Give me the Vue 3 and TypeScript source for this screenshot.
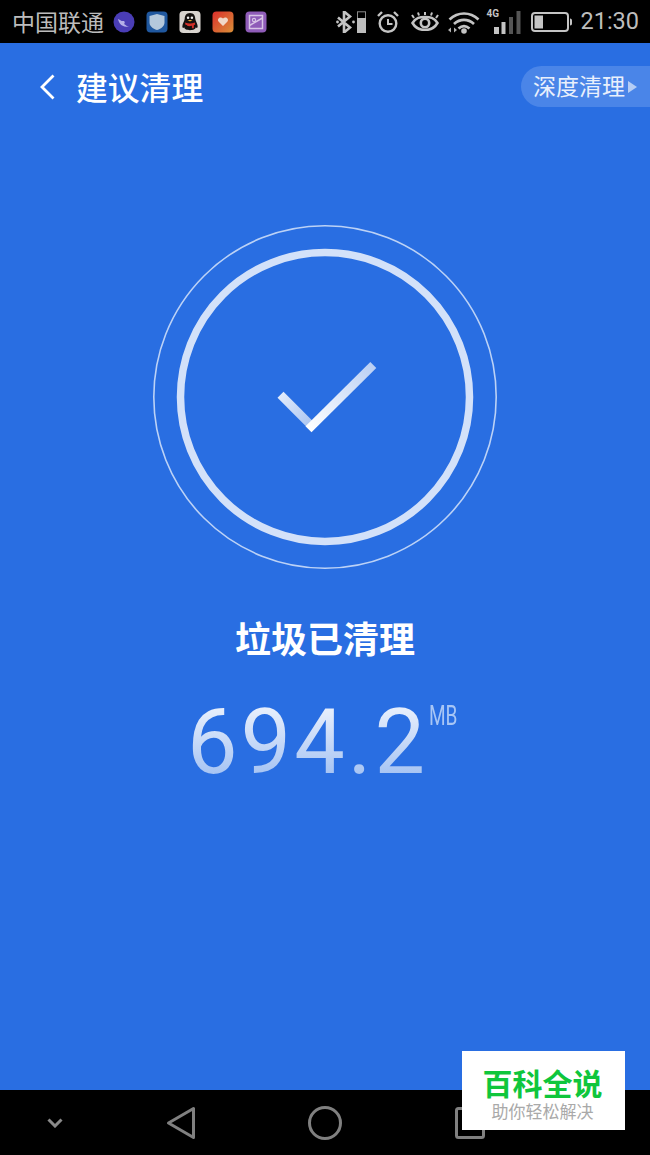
<script setup lang="ts">
const title = '建议清理'
const cleaned = '垃圾已清理'
const size = '694.2'
</script>

<template>
  <div class="screen">
    <div class="status">
      <span class="carrier">中国联通</span>
      <div class="apps">
        <svg class="app" viewBox="0 0 22 22"><circle cx="11" cy="11" r="10.500" fill="#4a3db5"/><path d="M5 8c1 5 4 8 11 8-3-1-3-2-5-3 1-1 1-2 0-3-2 0-3 0-4-1z" fill="#b5b0e8"/></svg>
        <svg class="app" viewBox="0 0 22 22"><rect x="0.500" y="0.500" width="21" height="21" rx="4" fill="#20589f"/><path d="M11 3l7.500 2v6.500c0 3.500-3 6-7.500 7.500-4.500-1.500-7.500-4-7.500-7.500V5z" fill="#b4c8dc"/></svg>
        <svg class="app" viewBox="0 0 22 23"><rect width="22" height="23" rx="4" fill="#d8d4cf"/><path d="M11 2c4 0 5.500 3 5.500 6 0 2 2.500 5 2.500 8 0 2-1 2-2 1 0 2-3 3-6 3s-6-1-6-3c-1 1-2 1-2-1 0-3 2.500-6 2.500-8 0-3 1.500-6 5.500-6z" fill="#14110f"/><path d="M6 12c3 1.500 7 1.500 10 0l.5 2-1.500 1v3H13v-2.500c-2 .5-3.500.5-5 0V15l-2-1z" fill="#d23028"/><circle cx="9" cy="7" r="1.300" fill="#eee"/><circle cx="13" cy="7" r="1.300" fill="#eee"/><path d="M8.500 9.500h5L11 11z" fill="#e8a930"/></svg>
        <svg class="app" viewBox="0 0 22 22"><defs><linearGradient id="hg" x1="0" y1="0" x2="1" y2="1"><stop offset="0" stop-color="#dc2f2c"/><stop offset="1" stop-color="#d99038"/></linearGradient></defs><rect x="0.500" y="0.500" width="21" height="21" rx="4" fill="url(#hg)"/><path d="M11 15l-4.500-4.500c-2-3.500 2.500-5.500 4.500-3 2-2.500 6.500-.5 4.500 3z" fill="#f0d8c8"/></svg>
        <svg class="app" viewBox="0 0 22 22"><rect x="0.500" y="0.500" width="21" height="21" rx="4" fill="#8f5cb8"/><rect x="4.500" y="4.500" width="13" height="13" fill="none" stroke="#d8c4e6" stroke-width="1.500"/><path d="M4.500 14.500l13-7.500" stroke="#d8c4e6" stroke-width="1.500"/><circle cx="9" cy="9" r="1.600" fill="none" stroke="#d8c4e6" stroke-width="1.200"/></svg>
      </div>
      <div class="sys">
        <svg class="i-bt" viewBox="0 0 30 22"><path d="M2 6.500l12 10-6 5v-21l6 5-12 10" fill="none" stroke="#c4c4c4" stroke-width="2.600"/><circle cx="1.500" cy="11" r="1.400" fill="#c4c4c4"/><circle cx="17.500" cy="11" r="1.400" fill="#c4c4c4"/><rect x="21.500" y="0.800" width="8" height="20.400" fill="none" stroke="#8a8a8a" stroke-width="1"/><rect x="21" y="7" width="9" height="15" fill="#bdbdbd"/></svg>
        <svg class="i-alarm" viewBox="0 0 22 22"><circle cx="11" cy="12.500" r="8.300" fill="none" stroke="#c4c4c4" stroke-width="2.400"/><path d="M11 8v5h4.500" fill="none" stroke="#c4c4c4" stroke-width="2"/><path d="M1 5l4-4M21 5l-4-4" stroke="#c4c4c4" stroke-width="2.400"/></svg>
        <svg class="i-eye" viewBox="0 0 28 19"><path d="M1.500 11C5 5.500 9 5 14 5s9 .5 12.500 6C23 17 19 18 14 18S5 17 1.500 11z" fill="none" stroke="#c4c4c4" stroke-width="2.500"/><circle cx="14" cy="11" r="4.200" fill="none" stroke="#c4c4c4" stroke-width="2.600"/><path d="M3 6L1 3M8 3.500L7 .5M14 3V0M20 3.500l1-3M25 6l2-3" stroke="#c4c4c4" stroke-width="2"/></svg>
        <svg class="i-wifi" viewBox="0 0 32 24"><path d="M1.500 9.500c8.500-8 20.500-8 29 0M6 14c6-5.500 14-5.500 20 0M10.500 18.500c3.500-3 7.500-3 11 0" fill="none" stroke="#c4c4c4" stroke-width="2.700"/><circle cx="16" cy="21" r="2.800" fill="#c4c4c4"/><path d="M0 20l3-2.500v5zM9 20l-3-2.500v5z" fill="#b0b0b0"/></svg>
        <div class="signal">
          <span class="net">4G</span>
          <svg class="i-sig" viewBox="0 0 27 23"><rect x="0" y="16" width="5" height="7" fill="#c4c4c4"/><rect x="7.500" y="11" width="4" height="12" fill="#c4c4c4"/><rect x="15" y="6" width="4" height="17" fill="#555"/><rect x="22.500" y="0" width="4" height="23" fill="#555"/></svg>
        </div>
        <svg class="i-bat" viewBox="0 0 41 20"><rect x="1" y="1" width="36" height="18" rx="3" fill="none" stroke="#c4c4c4" stroke-width="2"/><rect x="3.500" y="3.500" width="8.500" height="13" fill="#c4c4c4"/><path d="M39 6.500c1.500 0 2 1 2 2v3c0 1-.5 2-2 2z" fill="#c4c4c4"/></svg>
        <span class="time">21:30</span>
      </div>
    </div>

    <main class="main">
      <header class="bar">
        <div class="back">
          <svg class="chev" viewBox="0 0 17 26"><path d="M14.500 1.500L3 13l11.500 11.500" fill="none" stroke="#fff" stroke-width="2.800"/></svg>
          <h1 class="heading">{{ title }}</h1>
        </div>
        <div class="deep">
          <span>深度清理</span>
          <i class="tri"></i>
        </div>
      </header>

      <svg class="rings" viewBox="0 0 344 344">
        <defs>
          <linearGradient id="armA" gradientUnits="userSpaceOnUse" x1="127" y1="170" x2="159" y2="201">
            <stop offset="0" stop-color="#e2ebfb"/>
            <stop offset="1" stop-color="#a9c4f1"/>
          </linearGradient>
          <linearGradient id="armB" gradientUnits="userSpaceOnUse" x1="156" y1="204" x2="221" y2="139">
            <stop offset="0" stop-color="#ffffff"/>
            <stop offset="1" stop-color="#b9cff4"/>
          </linearGradient>
        </defs>
        <circle cx="172" cy="172" r="171.200" fill="none" stroke="#bcd2f6" stroke-width="1.600"/>
        <circle cx="172" cy="172" r="144.500" fill="none" stroke="#d3e1f9" stroke-width="7.500"/>
        <path d="M127.500 169.700L158.700 201" fill="none" stroke="url(#armA)" stroke-width="8.500"/>
        <path d="M155.500 204.200L220.300 140" fill="none" stroke="url(#armB)" stroke-width="8.500"/>
      </svg>

      <h2 class="cleaned">{{ cleaned }}</h2>
      <div class="amount">
        <span class="num">{{ size }}</span>
        <span class="unit">MB</span>
      </div>
    </main>

    <nav class="nav">
      <svg class="n-chev" viewBox="0 0 16 10"><path d="M1.500 1.500L8 8l6.500-6.500" fill="none" stroke="#8a8a8a" stroke-width="3"/></svg>
      <svg class="n-back" viewBox="0 0 30 34"><path d="M27.500 2.500v29L2.500 17z" fill="none" stroke="#808080" stroke-width="3" stroke-linejoin="round"/></svg>
      <svg class="n-home" viewBox="0 0 34 34"><circle cx="17" cy="17" r="15.500" fill="none" stroke="#808080" stroke-width="3"/></svg>
      <svg class="n-recent" viewBox="0 0 30 32"><rect x="1.500" y="1.500" width="27" height="29" rx="2" fill="none" stroke="#808080" stroke-width="3"/></svg>
    </nav>

    <div class="mark">
      <strong>百科全说</strong>
      <small>助你轻松解决</small>
    </div>
  </div>
</template>

<style>
html, body { margin: 0; padding: 0; background: #000; }
</style>

<style scoped>
.screen {
  position: relative;
  width: 650px;
  height: 1155px;
  display: flex;
  flex-direction: column;
  overflow: hidden;
  font-family: "Noto Sans CJK SC", "Roboto", sans-serif;
  background: #296ee2;
}
.status {
  height: 43px;
  flex: none;
  background: #000;
  display: flex;
  align-items: center;
  padding: 0 11px 0 12px;
  box-sizing: border-box;
}
.carrier { font-size: 23px; line-height: 43px; color: #bcbcbc; width: 92px; white-space: nowrap; }
.apps { display: flex; gap: 11px; margin-left: 9px; }
.app { width: 22px; height: 22px; display: block; }
.sys { margin-left: auto; display: flex; align-items: center; }
.sys svg { display: block; flex: none; }
.i-bt { width: 30px; height: 22px; margin-right: 11px; }
.i-alarm { width: 22px; height: 22px; margin-right: 12px; }
.i-eye { width: 28px; height: 19px; margin-right: 9px; }
.i-wifi { width: 32px; height: 24px; margin-right: 6px; }
.signal { position: relative; width: 35px; height: 25px; margin-right: 10px; display: flex; justify-content: flex-end; align-items: flex-end; }
.net { position: absolute; left: 0; top: 0; font: 700 10px/10px Roboto, sans-serif; color: #c4c4c4; }
.i-sig { width: 27px; height: 23px; }
.i-bat { width: 41px; height: 20px; margin-right: 8px; }
.time { font: 400 23.500px/43px Roboto, sans-serif; color: #bdbdbd; }

.main { flex: 1; min-height: 0; display: flex; flex-direction: column; align-items: center; }
.bar {
  align-self: stretch;
  display: flex;
  justify-content: space-between;
  align-items: center;
  margin-top: 23px;
  height: 41px;
}
.back { display: flex; align-items: center; margin-left: 39px; }
.chev { width: 17px; height: 26px; display: block; margin-right: 20px; }
.heading { margin: 0; font-size: 31.800px; font-weight: 500; color: #fff; line-height: 41px; white-space: nowrap; }
.deep {
  width: 129px;
  height: 41px;
  box-sizing: border-box;
  padding: 0 0 3px 12px;
  background: #4a85e8;
  border-radius: 20.500px 0 0 20.500px;
  display: flex;
  align-items: center;
  color: #e9f0fc;
  font-size: 23px;
  white-space: nowrap;
}
.tri {
  display: block;
  margin: 3px 0 0 3px;
  border-left: 9px solid #b5cdf5;
  border-top: 6px solid transparent;
  border-bottom: 6px solid transparent;
}
.rings { width: 344px; height: 344px; display: block; margin-top: 118px; flex: none; }
.cleaned { margin: 44px 0 0; font-size: 36px; line-height: 48px; font-weight: 700; color: #fff; white-space: nowrap; }
.amount { display: flex; align-items: flex-start; margin: 26px 0 0 -4px; }
.num {
  font: 400 90px/112px Roboto, sans-serif;
  background: linear-gradient(180deg, #e6eefc 20%, #9fbff2 85%);
  -webkit-background-clip: text;
  background-clip: text;
  color: transparent;
  letter-spacing: 3px;
}
.unit {
  font: 400 28px/28px Roboto, sans-serif;
  color: #a8c6f5;
  width: 30px;
  margin-top: 15px;
  margin-left: 1px;
  transform: scaleX(.68);
  transform-origin: left center;
}

.nav { height: 65px; flex: none; background: #000; display: flex; align-items: center; padding-left: 47px; box-sizing: border-box; }
.nav svg { display: block; flex: none; }
.n-chev { width: 16px; height: 10px; margin-right: 103px; }
.n-back { width: 30px; height: 34px; margin-right: 112px; }
.n-home { width: 34px; height: 34px; margin-right: 113px; }
.n-recent { width: 30px; height: 32px; }

.mark {
  position: absolute;
  left: 462px;
  top: 1051px;
  width: 163px;
  height: 79px;
  box-sizing: border-box;
  padding-right: 2px;
  background: #fff;
  display: flex;
  flex-direction: column;
  align-items: center;
  white-space: nowrap;
}
.mark strong { font-size: 30px; line-height: 30px; margin-top: 16px; font-weight: 700; color: #0fc63c; }
.mark small { font-size: 17px; line-height: 20px; margin-top: 4px; color: #a9a9a9; }
</style>
